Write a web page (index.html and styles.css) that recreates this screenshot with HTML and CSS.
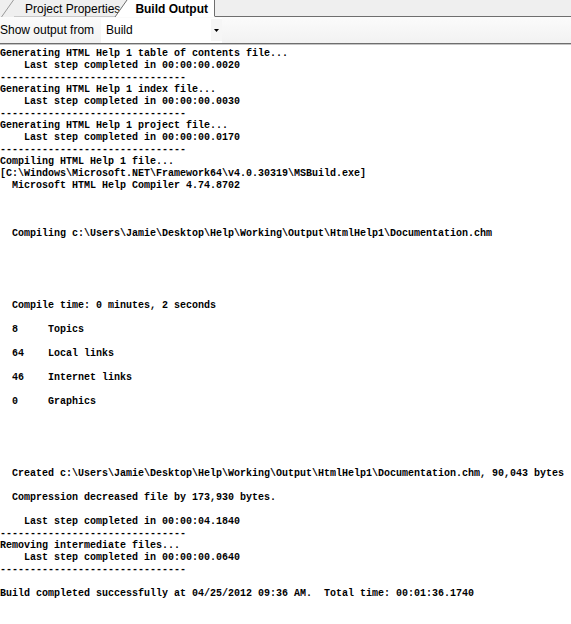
FILE: index.html
```html
<!DOCTYPE html>
<html lang="en">
<head>
    <meta charset="UTF-8">
    <title>Build Output</title>
    <link rel="stylesheet" href="styles.css">
</head>
<body>
    <div class="tabs">
        <svg class="slant" width="14" height="17" viewBox="0 0 14 17">
            <line x1="1.5" y1="17" x2="13.5" y2="0" stroke="#9a9a9a" stroke-width="1"/>
        </svg>
        <div class="tab">Project Properties</div>
        <svg class="slant slant-active" width="14" height="17" viewBox="0 0 14 17">
            <polygon points="1,17 13,0 14,0 14,17" fill="#ffffff"/>
            <line x1="1" y1="17" x2="13" y2="0" stroke="#6e6e6e" stroke-width="1"/>
        </svg>
        <div class="tab tab-active">Build Output</div>
        <div class="tab-fill"></div>
    </div>

    <div class="toolbar">
        <span class="toolbar-label">Show output from</span>
        <div class="combo">
            <span class="combo-value">Build</span>
            <span class="combo-btn">
                <svg width="5" height="3" viewBox="0 0 5 3"><polygon points="0,0 5,0 2.5,3" fill="#000"/></svg>
            </span>
        </div>
    </div>

    <pre class="output">Generating HTML Help 1 table of contents file...
    Last step completed in 00:00:00.0020
-------------------------------
Generating HTML Help 1 index file...
    Last step completed in 00:00:00.0030
-------------------------------
Generating HTML Help 1 project file...
    Last step completed in 00:00:00.0170
-------------------------------
Compiling HTML Help 1 file...
[C:\Windows\Microsoft.NET\Framework64\v4.0.30319\MSBuild.exe]
  Microsoft HTML Help Compiler 4.74.8702



  Compiling c:\Users\Jamie\Desktop\Help\Working\Output\HtmlHelp1\Documentation.chm





  Compile time: 0 minutes, 2 seconds

  8     Topics

  64    Local links

  46    Internet links

  0     Graphics





  Created c:\Users\Jamie\Desktop\Help\Working\Output\HtmlHelp1\Documentation.chm, 90,043 bytes

  Compression decreased file by 173,930 bytes.

    Last step completed in 00:00:04.1840
-------------------------------
Removing intermediate files...
    Last step completed in 00:00:00.0640
-------------------------------

Build completed successfully at 04/25/2012 09:36 AM.  Total time: 00:01:36.1740</pre>
</body>
</html>
```

FILE: styles.css
```css
html,
body {
    margin: 0;
    padding: 0;
    background: #ffffff;
    overflow: hidden;
}

body {
    font-family: "Liberation Sans", Arial, sans-serif;
    font-size: 12px;
    color: #000000;
}

.tabs {
    display: flex;
    height: 17px;
    background: #efefef;
}

.slant {
    display: block;
    flex: none;
}

.tab {
    height: 16px;
    line-height: 18px;
    padding: 0 4px 0 11px;
    border-bottom: 1px solid #c9c9c9;
    white-space: nowrap;
}

.slant-active {
    margin-left: -10px;
}

.tab-active {
    background: #ffffff;
    font-weight: bold;
    padding: 0 6px 0 7px;
    border-right: 1px solid #6e6e6e;
    border-bottom: 1px solid #ffffff;
}

.tab-fill {
    flex: 1;
    height: 16px;
    border-bottom: 1px solid #6e6e6e;
}

.toolbar {
    display: flex;
    align-items: center;
    height: 26px;
    background: linear-gradient(#fbfbfb, #f2f2f2);
    border-bottom: 1px solid #6e6e6e;
}

.toolbar-label {
    line-height: 24px;
    padding-right: 4px;
    width: 97px;
}

.combo {
    display: flex;
    align-items: center;
    width: 121px;
    height: 25px;
    background: #ffffff;
}

.combo-value {
    flex: 1;
    padding-left: 5px;
}

.combo-btn {
    display: flex;
    align-items: center;
    justify-content: center;
    width: 11px;
    height: 22px;
    background: #f6f6f6;
}

.combo-btn svg {
    display: block;
}

.output {
    margin: 0;
    padding: 3px 0 0 0;
    border-top: 1px solid #c4c4c4;
    font-family: "Liberation Mono", "Courier New", monospace;
    font-weight: bold;
    font-size: 10px;
    line-height: 12px;
    white-space: pre;
    overflow: hidden;
}
```
